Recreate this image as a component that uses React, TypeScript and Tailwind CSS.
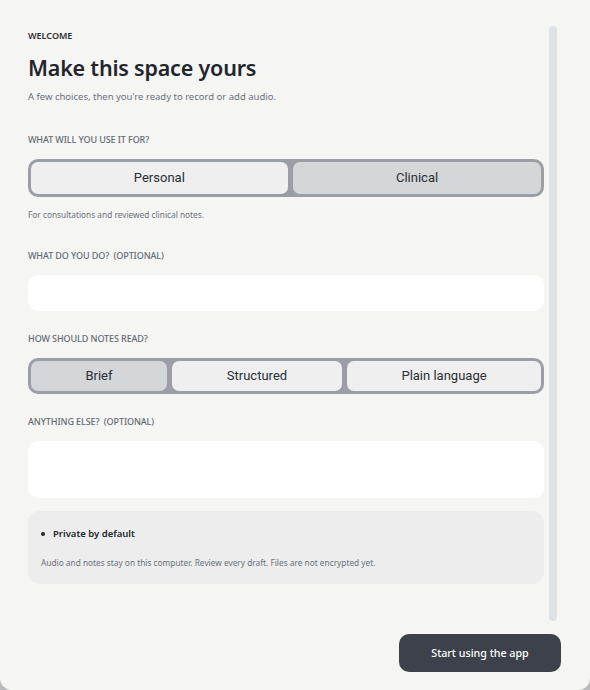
import { useState } from 'react';

const ui = { fontFamily: '"Segoe UI", "Noto Sans", "Open Sans", sans-serif' };
const rob = { fontFamily: 'Roboto, "Liberation Sans", sans-serif' };

function Label({ children }: { children: React.ReactNode }) {
  return <div className="text-[9px] leading-[12px] font-medium uppercase tracking-[-0.1px] text-[#646a73]">{children}</div>;
}

function Segmented({ options, value, onChange, tall }: { options: string[]; value: string; onChange: (v: string) => void; tall?: boolean }) {
  return (
    <div className={`flex gap-[5.5px] rounded-[10px] bg-[#9b9fa5] p-[3px] ${tall ? 'h-[38px]' : 'h-[36px]'}`}>
      {options.map((o) => (
        <button
          key={o}
          onClick={() => onChange(o)}
          style={rob}
          className={`flex-auto rounded-[7px] text-[13px] text-[#2a2e35] ${value === o ? 'bg-[#d3d7da]' : 'bg-[#eeefee]'}`}
        >
          {o}
        </button>
      ))}
    </div>
  );
}

export default function App() {
  const [use, setUse] = useState('Clinical');
  const [tone, setTone] = useState('Brief');
  return (
    <div className="h-[690px] w-[590px] bg-[#b9bbbd]" style={ui}>
      <div className="flex h-full flex-col rounded-b-[12px] bg-[#f5f5f3]">
        <div className="flex h-[621px] pt-[26px] pl-[28px] pr-[33px]">
          <div className="flex-1 pt-1">
            <div className="text-[9px] leading-[12px] font-semibold text-[#2b2f36]">WELCOME</div>
            <h1 className="mt-3 text-[21.5px] leading-[28px] font-semibold tracking-[-0.2px] text-[#22262c]">Make this space yours</h1>
            <p className="mt-[9px] text-[9.5px] leading-[12px] text-[#6b717a]">A few choices, then you're ready to record or add audio.</p>

            <div className="mt-[31px]"><Label>What will you use it for?</Label></div>
            <div className="mt-[13px]">
              <Segmented tall options={['Personal', 'Clinical']} value={use} onChange={setUse} />
            </div>
            <p className="mt-3 text-[8.3px] leading-[12px] text-[#6b717a]">For consultations and reviewed clinical notes.</p>

            <div className="mt-[29px]"><Label>What do you do?&nbsp; (optional)</Label></div>
            <input className="mt-[13px] block h-[36px] w-full rounded-[10px] bg-white px-3 text-[12px] outline-none" />

            <div className="mt-[22px]"><Label>How should notes read?</Label></div>
            <div className="mt-[13px]">
              <Segmented options={['Brief', 'Structured', 'Plain language']} value={tone} onChange={setTone} />
            </div>

            <div className="mt-[22px]"><Label>Anything else?&nbsp; (optional)</Label></div>
            <textarea className="mt-[13px] block h-[57px] w-full resize-none rounded-[10px] bg-white px-3 py-2 text-[12px] outline-none" />

            <div className="mt-[13px] h-[73px] rounded-[12px] bg-[#ecedec] px-[13px] pt-[17px]">
              <div className="flex items-center gap-[8px] text-[9.5px] leading-[12px] font-semibold text-[#22262c]">
                <span className="h-[4px] w-[4px] rounded-full bg-[#22262c]" />
                Private by default
              </div>
              <p className="mt-[17px] text-[8.3px] leading-[12px] text-[#6b717a]">
                Audio and notes stay on this computer. Review every draft. Files are not encrypted yet.
              </p>
            </div>
          </div>
          <div className="ml-[5px] w-[8px] rounded-full bg-[#e0e3e5]" />
        </div>
        <div className="flex justify-end pr-[29px] pt-[13px]">
          <button className="h-[38px] w-[162px] rounded-[10px] bg-[#3d424a] text-[10.7px] font-medium text-white">Start using the app</button>
        </div>
      </div>
    </div>
  );
}
